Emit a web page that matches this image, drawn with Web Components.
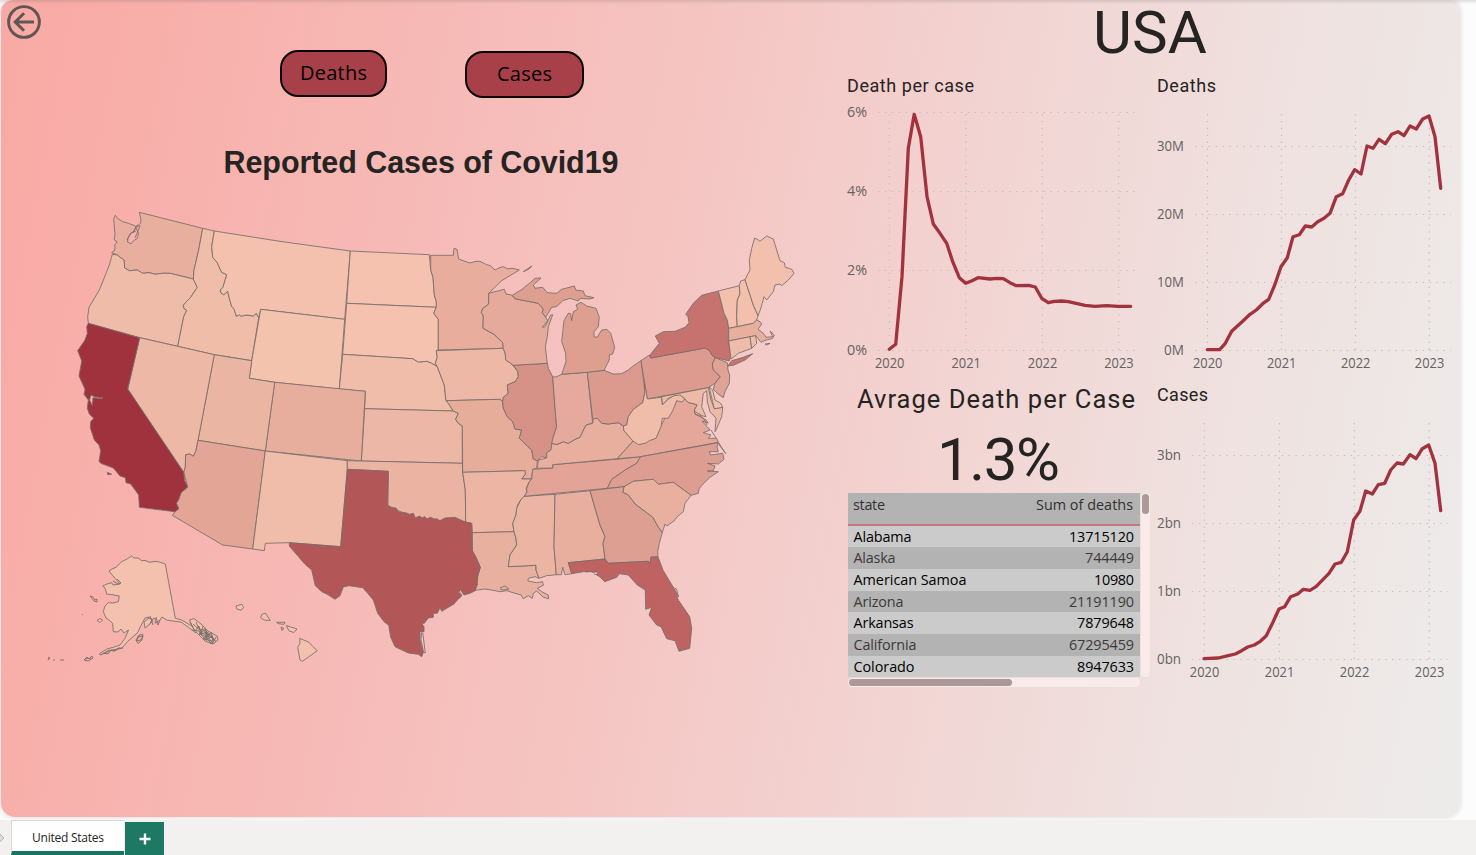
<!DOCTYPE html>
<html lang="en">
<head>
<meta charset="utf-8">
<title>Covid19 report</title>
<style>
html,body{margin:0;height:100%;overflow:hidden;background:#fcfcfc;font-family:"Open Sans","Noto Sans",sans-serif;color:#252423}
</style>
</head>
<body>
<covid-report></covid-report>
<script>
const define=(name,html,setup)=>{
  const t=document.createElement('template');t.innerHTML=html;
  customElements.define(name,class extends HTMLElement{
    constructor(){super();this.attachShadow({mode:'open'}).append(t.content.cloneNode(true));}
    connectedCallback(){if(setup)setup(this,this.shadowRoot);}
  });
};

/* Text whose tracking is adjusted so that it fills the width it is given. */
define('fit-text',`<style>:host{display:inline-block;white-space:nowrap;line-height:1}span{display:inline-block}</style><span><slot></slot></span>`,(el,root)=>{
  const span=root.querySelector('span'),w=+el.getAttribute('w'),n=el.textContent.length;
  const natural=span.getBoundingClientRect().width;
  if(w&&natural)span.style.letterSpacing=((w-natural)/(n-1||1))+'px';
  if(w)el.style.width=w+'px';
});

define('back-button',`<style>:host{display:block;width:34px;height:34px}svg{display:block}</style>
<svg width="34" height="34" fill="none" stroke="#605654" stroke-width="2.9"><circle cx="17" cy="17" r="15.4"/><path d="M27 17H9M17 8.2L8.2 17L17 25.8" stroke-width="3"/></svg>`);

define('pill-button',`<style>:host{display:flex;box-sizing:border-box;align-items:center;justify-content:center;height:47px;padding-bottom:2px;border:2px solid #0b0304;border-radius:18px;background:#a8404a;color:#000;font-size:20px}</style><slot></slot>`);

const STATES=[
['#e8ae9e','115.3,215.3 118.3,219 122.7,221.7 128.3,223.3 134,225.3 136,227 134,231 130,234 128,238 127.5,242 131,243.8 133.5,240.8 137,238.6 138.6,233.5 136.2,228.5 138.5,225 141,222.7 140.7,218.3 139.3,212.3 202.7,228.3 198.7,250 194,270 193.3,279 181,276 170,273.3 162,273.3 155,274.3 149.3,272.7 142.7,273.3 137.3,270 129.3,270.7 124.7,268 124,260 120,257.3 117.3,255 111.7,252.7 114.3,250.7 115,248 114.7,245 117.3,241.7 114.3,240 115,234 114.3,226.7 113.7,219'],
['#efbcaa','112.3,254.3 117.3,255 120,257.3 124,260 124.7,268 129.3,270.7 137.3,270 142.7,273.3 149.3,272.7 155,274.3 162,273.3 170,273.3 181,276 193.3,279 197.3,287.3 190.7,297.3 186,302 183.3,305.3 184,308.5 186.7,310.3 183.7,316.7 177.7,346.3 139.7,337.7 88.3,323.3 87.7,316.7 89,307.3 99.3,290 105,276 109.3,265'],
['#f0bda9','202.7,228.3 214.3,231 211.7,246.7 212.7,257.3 217,262.3 221.7,272.3 226.7,274.7 223,287.3 220.3,290 221,293 223.7,294.7 227.7,291.3 229.3,298.3 231.7,306.7 234,308.7 236.3,316.3 239.3,314.7 241,316.2 243.3,315.7 247,315 253.3,316 256.3,313.3 258.7,317.7 251.7,360.7 214.3,354.7 177.7,346.3 183.7,316.7 186.7,310.3 184,308.5 183.3,305.3 186,302 190.7,297.3 197.3,287.3 193.3,279 194,270 198.7,250'],
['#f3c1ad','214.3,231 281,241.5 350.3,251 344.7,319.3 260.7,309.3 258.7,317.7 256.3,313.3 253.3,316 247,315 243.3,315.7 241,316.2 239.3,314.7 236.3,316.3 234,308.7 231.7,306.7 229.3,298.3 227.7,291.3 223.7,294.7 221,293 220.3,290 223,287.3 226.7,274.7 221.7,272.3 217,262.3 212.7,257.3 211.7,246.7'],
['#f3c3ae','260.7,309.3 344.7,319.3 339.3,389 274.7,382.3 249.3,378.3 251.7,360.7'],
['#f4c2ae','350.3,251 429.3,254.7 430.7,270 433,277.3 434.3,295 436.3,301.7 436.3,307.3 346.7,303.3'],
['#f4c2ae','346.7,303.3 436.3,307.3 433.7,313.3 438.3,319.3 438.3,350 436.3,350.7 437.3,357.3 435.3,363.3 437.3,366.7 431.7,363.3 426.7,361.3 418.3,362.3 412.7,358.7 342.7,354.3'],
['#f0bdaa','342.7,354.3 412.7,358.7 418.3,362.3 426.7,361.3 431.7,363.3 437.3,366.7 441.7,378.3 444.3,385 445.7,399.3 448.3,403.3 453.3,411 364.7,408.7 365.3,391.3 339.3,389'],
['#edb7a7','364.7,408.7 453.3,411 458.3,413.3 455.7,419.3 458,423 462.3,426 462.3,463.3 361.3,461'],
['#e8ae9d','274.7,382.3 365.3,391.3 361.3,461 265.3,451'],
['#ebb5a3','214.3,354.7 251.7,360.7 249.3,378.3 274.7,382.3 265.3,451 198,440.3'],
['#edb8a5','139.7,337.7 177.7,346.3 214.3,354.7 198,440.3 196,450.7 193.3,456.3 190,454 185.7,454.7 185.3,467.3 183.7,472.3 127.7,389'],
['#e3a596','198,440.3 265.3,451 252.7,549 222.7,545 172.3,515.3 175,511.7 178.7,508.7 176.3,503.3 181,492.7 187.7,487 183.7,472.3 185.3,467.3 185.7,454.7 190,454 193.3,456.3 196,450.7'],
['#efbda9','265.3,451 347.3,460.7 347.3,469.3 340.7,546.7 289.3,542.7 265.3,543.3 264.3,550.7 252.7,549'],
['#ebb3a2','347.3,460.7 462.3,463.3 462.7,472.3 465.3,490 465.7,522 455,519 440,522 415,519 387.7,505.3 388.3,471.3 347.3,469.3'],
['#e8ad9d','430.7,255.3 453.3,255.3 454,248.3 457,249.3 458.7,259 464,261 470,263 475,261.5 480,261.3 486.7,264.7 490,265.5 495,270 500,267.5 503.3,266.7 507.3,268.7 513,268.3 519.3,270 511,275 501.7,280.7 488.7,293.3 488.7,304 482.7,308.7 481.3,312.3 483.3,316 483,328.3 494,334.3 502.7,342.7 503.3,348.3 438.3,350 438.3,319.3 433.7,313.3 436.3,307.3 436.3,301.7 434.3,295 433,277.3 430.7,270'],
['#edb8a6','436.3,350.7 503.3,348.3 505.3,354 505.7,360 511.7,364 517.7,371.3 518.3,376.7 515,381.7 507.3,385 508.3,393.3 503.3,397.3 502.7,401.7 500,399.3 446,400.7 444.3,385 441.7,378.3 437.3,366.7 435.3,363.3 437.3,357.3'],
['#e7ad9b','446,400.7 500,399.3 502.7,401.7 503.3,408.3 507.3,416.7 512.7,421.7 515,429 521.7,430 519.3,438.3 531.7,450 533.3,459 537.3,460.7 536.7,468.3 532.7,469.3 531.7,479 521.7,479 525.3,474 525,470.7 462.7,472.3 462.3,426 458,423 455.7,419.3 458.3,413.3 453.3,411 448.3,403.3'],
['#edb6a4','462.7,472.3 525,470.7 525.3,474 521.7,479 531.7,479 529.3,481.7 526,488.3 527,492 523.3,497.3 520.7,500 518,504 516.7,508.3 516,515 512.7,523.3 514,531.7 472.3,532.7 471.7,523.3 465.7,522 465.3,490'],
['#e8b09f','472.3,532.7 514,531.7 516,538.3 516.7,545 510,555 508.3,566.7 536,565.3 536,570 539,578.3 535,576.7 528.3,578.3 528,581 536.7,582.7 542.7,581.7 543.3,585.3 537.3,588.3 541.7,591.7 548.3,595 548.7,598.7 543.3,597.3 536.7,591 533.3,593.3 532.3,598.3 528.3,595.7 523.3,598.7 521,595 515,593.3 506.7,590.7 500,591.7 494,590.5 485,589 477.3,590 475,590.7 477.7,576 480.3,567.3 476,557.3 472.3,550.7'],
['#ecb5a3','524,496.3 555,494.3 554,546.7 556.3,574.7 546.7,575.7 539,578.3 536,570 536,565.3 508.3,566.7 510,555 516.7,545 516,538.3 514,531.7 512.7,523.3 516,515 516.7,508.3 520.7,500'],
['#e8af9f','555,494.3 590,490.7 600,525 605,536.7 603,543.3 605,559 568.3,562.7 571.7,573.7 565,574.7 562.7,567.3 561.3,574.7 556.3,574.7 554,546.7'],
['#e3a396','532.7,469.3 552.7,468 552.7,464.7 616.7,459.3 640.7,456.7 636.7,463.3 625,470 618,475 611.7,479.3 607.3,488.3 524.3,496.3 527,492 526.7,488.3 529.3,481.7 531.7,479'],
['#e8ae9e','537.3,468.3 538.3,460 545.7,458.3 546.7,452.7 550.7,450 551.7,443.3 557,444.5 563.3,441.7 568.3,443.3 575,439.3 580,437.3 583.3,430 586,425 592.7,423.3 593.3,417.3 597.3,418.3 601.7,423.3 608.3,424 618.3,422.7 623.3,426 624,430.7 633.3,441 625,450 617.3,458.7 552.7,464.7 552.7,468'],
['#d69287','513.3,365.3 547.3,363.3 548.3,368.3 552.7,376.7 555.7,416.7 556.7,426.7 553.3,436.7 551.7,445 550.7,450 546.7,452.7 546.7,457.7 541.7,456.7 537.3,460.7 533.3,459 531.7,450 519.3,438.3 521.7,430 515,429 512.7,421.7 507.3,416.7 503.3,408.3 502.7,401.7 503.3,397.3 508.3,393.3 507.3,385 515,381.7 518.3,376.7 517.7,371.3'],
['#e6a99d','552.7,376.7 556,377 561.7,374.3 587.3,372.3 592.7,422.7 586,425 583.3,430 580,437.3 575,439.3 568.3,443.3 563.3,441.7 557,444.5 551.7,443.3 553.3,436.7 556.7,426.7 555.7,416.7'],
['#db9a8d','587.3,372.3 604,370.3 613.3,374 621.7,373.7 628.3,370 633,366 641,360.7 644,383.3 644.7,393.3 642.7,402.7 633.3,409.3 628.3,416.7 626.7,425 623.3,426 618.3,422.7 608.3,424 601.7,423.3 597.3,418.3 592.7,419'],
['#e5aa9c','488.7,293.3 504.3,289.3 506,294 511.7,295 515,298.7 538.3,303.3 543.3,309 542.3,312.7 545.7,317.3 547.7,320.7 542.3,327.3 545,326.7 550.7,315 552.7,314.7 548.3,326.7 547.3,336.7 545.3,346.7 547.3,363.3 513.3,365.3 511.7,364 505.7,360 505.3,354 503.3,348.3 502.7,342.7 494,334.3 483,328.3 483.3,316 481.3,312.3 482.7,308.7 488.7,304'],
['#de9f91','512.3,295.3 521,290 530.7,282.3 535,278.3 541,278 533.3,285 535,288.3 542.7,287.3 547.3,292.7 556.7,293.3 561.7,289.3 574.3,286 575.7,290 583.3,291 585,295.7 594,297.7 590,299 580,298.3 578.3,301 570,298.3 562.7,300.7 556.7,306.7 551.7,307.3 545.7,317.3 542.3,312.7 543.3,309 538.3,303.3 515,298.7'],
['#de9f91','561.7,374.3 566,361.7 565.7,353.3 561.7,341.7 563.3,326.7 564,320.7 568.3,313.3 570.5,313.5 571.7,320.7 573.3,311.7 577.7,309.3 576,305 581,302.3 586.7,306 596,308.3 599.3,317.3 598.3,326.7 594,331.7 594,336.7 597.3,337.3 601.7,330 606.7,329.3 610.7,333.3 614.7,347.3 612.7,354 609.3,355 609.3,360 604,370.3 587.3,372.3'],
['#de9f91','523.3,271.7 531.7,266 529,269'],
['#dc9b8e','641,360.7 649.3,355 650.7,358 705.3,348 710,351 711.7,355 715.3,357.7 712.3,364 713.3,370 720.3,376.7 715,383.3 708.3,387.7 647.3,399'],
['#c6726f','650,355 659.3,343.3 655.3,336 663.3,331.7 675,331.3 685,327.3 689,322.7 688,316.7 685.7,314.3 693.3,303.3 701.7,295.3 718.3,291 720.7,300 724,313.3 727.3,320 728.7,328.3 728.3,341 731,355 729.3,361 715.3,357.7 711.7,355 710,351 705.3,348 650.7,358'],
['#c6726f','727.7,366 731.7,360.7 743.3,357.3 752.7,353.7 745,360 733.3,365.3'],
['#dfa294','715.3,357.7 727.3,362.7 728,370 729.7,375 729.3,383.3 725,391.7 723.3,397.7 717.3,393.3 713.3,389.3 715,383.3 720.3,376.7 713.3,370 712.3,364'],
['#f2c0ac','718.3,291 739.3,285.7 740,294 737.3,300 736.7,316.7 737.3,326.7 728.7,328.3 727.3,320 724,313.3 720.7,300'],
['#f2c0ad','739.3,285.7 740.7,281 745,279.7 753.3,305 758,315.7 756.7,320 753.3,323.3 737.3,326.7 736.7,316.7 737.3,300 740,294'],
['#f2c0ad','745,279.7 747.3,275 750,270 749.3,260 751.7,248.3 754.7,238 758.3,240 760,241.3 766.7,236 773.3,239 780,260.7 784.3,262.7 785.3,267.3 791.7,269.3 794,273.3 788.3,280 781.7,285.7 780,284 775,285 773.3,291.7 766.7,300 764,296.7 762.3,303.3 760,310.7 758,315.7 753.3,305'],
['#e8af9f','728.7,328.3 737.3,326.7 753.3,323.3 756.7,320 760,321.7 761.7,324 758,329.3 763.3,333.3 766,337.3 772.7,336.7 770,331 774.3,335 772.5,338.5 766,340 761,342.3 755.7,335.7 728.7,341'],
['#efbbaa','728.7,341 750,336.7 751.7,348.3 738.3,353.3 731,359'],
['#f1bdac','750,336.7 755.7,335.7 756.7,343.3 751.7,348.3'],
['#e8af9f','765,344 770,343.3 767,345'],
['#eeb9a7','661.7,396.7 708.3,387.7 711,400 714.3,408.7 722.7,407.3 721.7,416.7 716,430 715,431.7 716,418 710,411.7 707.3,401.7 706.7,390.7 703.3,393.3 701.7,406.7 706,416.7 695,414.3 694.3,410 697,405 694,404 688.3,402.7 682.3,396.7 675,395.7 668.3,398.3 662.3,405'],
['#f2c0ad','709,386.7 712.7,390 715,400 720.7,403.3 722.7,407.3 714.3,408.7'],
['#e4a799','633.3,441 640,444 649,440 656,438 661,426 665,418 672,410 677,400 684.7,399 688.3,402.7 694,404 697,405 694.3,410 695,414.3 701,417 706,420 708.3,423 702,421 710,430 703.3,432.7 711,435 708.3,438.3 716.7,438.3 718.3,442.3 640.7,456.7 617.3,458.7 625,450'],
['#f0bdaa','644.5,383.3 647.3,399 661.3,397.3 662.3,405 668.3,399 674,395.7 680,395 684.7,399 682,402 676.7,400.7 672.7,410.7 668.3,418.3 662.3,418.3 661,426.7 656,438.3 649.3,440.7 646,443 638.3,444.7 632.7,440.7 624,430.7 623.3,426 626.7,425 628.3,416.7 633.3,409.3 642.7,402.7 644.7,393.3'],
['#dd9d90','607.3,488.3 611.7,479.3 618,475 625,470 636.7,463.3 640.7,456.7 718.3,442.7 717,447 718.3,451.7 709.3,451.7 710.7,455 722.7,453.3 724,459.3 718.3,464 707.3,463.3 715,466 713.3,470.7 707.3,471 718.3,471.7 710,477.3 704,483 699.3,488.3 698.3,493.3 691,495.3 673.3,482.3 658.3,484.3 653.3,479.3 633.3,481.3 624,486.7'],
['#dd9d90','718.5,442.7 725.7,453.5 720,446'],
['#e9b09f','624,486.7 633.3,481.3 653.3,479.3 658.3,484.3 673.3,482.3 691,495.3 685,503.3 683.3,511.7 676.7,517.3 674,521 666.7,526 665,524 662.3,532.7 658.3,527.3 652.7,517.3 635,504 628.3,495 622.7,492.3'],
['#dd9f92','590,490.7 624,486.7 622.7,492.3 628.3,495 635,504 652.7,517.3 658.3,527.3 662.3,532.7 659.3,543.3 657.7,551.7 658,557 651,557 650,564.7 648.3,561.3 608.3,563.3 605,559 603,543.3 605,536.7 600,525'],
['#be6362','568.3,562.7 605,559 608.3,563.3 648.3,561.3 650,564.7 651,557 658,557 663.3,570.7 675,590 678.3,600 689.7,616.7 691.7,628.3 689.7,648.3 679,651.3 675,640.7 666.7,638.7 661,626.7 656.7,625 649,615 651.7,607.3 645.7,609.3 645.3,590 637.3,585 628.3,575 619.3,573.7 616.7,577.3 604.7,581.7 600,577 596.7,575 598.3,572.3 590,571.7 583.3,571.7 571.7,573.7'],
['#b35658','347.3,469.3 388.3,471.3 387.7,505.3 391.7,507.7 396,508 398.3,511.7 406.7,513 409.3,514.3 413.3,513.3 415.3,518 419.3,516 422.7,518 424,516.5 427.3,518.7 430.7,517.3 434,519 436.7,518.7 440,520.7 445,518 455,517.3 465,522 471.7,523.3 472.3,550.7 476,557.3 480.3,567.3 477.7,576 477.3,585 475,590.7 470,593.3 464,595 460.7,590 458.3,592 461.7,596 456.7,600.7 454,604 441.7,611.3 440,607.7 437.3,613.3 433.3,613.3 433.3,617.3 428.3,618 424.3,623.3 421.7,623.3 424,626.7 424,631.7 420,631.7 420,640 423.3,652.7 421.7,656.7 418.3,654.3 408.3,653 395,646.7 390.7,637.3 388.7,625.3 384,621.7 377.7,613.3 373.3,600 367.7,593.3 362.7,587.7 349,585.7 343.3,587 340,595.7 335,599.3 327.3,594.3 321.7,591.7 315.3,585.7 311.7,570 305,564.3 289.3,546 289.3,542.7 340.7,546.7'],
['#a0323d','88.3,323.3 139.7,337.7 127.7,389 183.7,472.3 184.5,480 187.7,487 181,492.7 179,499 176.3,503.3 178.7,508.7 175,511.7 139.3,507.3 138.7,495 130.7,484 126,482.7 125.3,477.7 120,476 113.3,468 100.7,463.3 99,461 100.7,451 99,445 94.3,440 90.3,427.7 90.7,421.7 93.7,418.3 89.3,414 87.3,408.3 88.3,400 84,394.3 85,389.3 79,376 81.7,361 77.7,350.7 85,340 87.3,333.3 86.7,326.7'],
['#a0323d','107.3,472.3 111.7,474.3 107.7,474.6'],
['#f4c1ae','131.7,556 134,558 138,558 141.7,560.7 145,560.5 150,562.3 154,561.5 158.3,561.7 165.3,564 175.3,618.3 181.7,620 190,625 198,629 196,633 188,627 181,622 175,621.3 166.7,620 162,617 160,620 155,623.3 156,619 153.3,618.3 152,622 146,626 149,617 145,618 140,627.3 138,632 135,635 127.3,641.7 121.7,648.3 111.7,650 100,655 99.5,653.5 107,649 113.3,647.3 120,645 125,638.3 128.5,630 124,633 121,629 118,632 113.3,631.7 112.7,623.3 109,620 106,618 103.3,611.7 105,606 108.3,602.7 113,603 118.3,601.7 119.3,596 114,595 106.7,594 105,588 102.7,586 107,584 111.7,582.7 113,585 120,584 115,578.3 109,571 112,569 116,567.3 121.7,561.7 127,559'],
['#f4c1ae','236,606 241.7,604.3 243.7,607.3 241,610.3 236.5,608.8'],
['#f4c1ae','260.5,617.5 262,614.3 265.5,613.3 270.3,620.5 264,620'],
['#f4c1ae','276.5,622.3 285,622.3 284,624.3 279,623.8'],
['#f4c1ae','281,627 284,628.7 281.8,630.5'],
['#f4c1ae','286.3,625.5 291,627 297,629 294,632.5 289,631'],
['#f4c1ae','299.7,638.3 309,642.3 312.7,646.5 317.3,650.7 310.3,655.7 302.3,661.3 300,660 297.7,647.3 300,643'],
['#f4c1ae','144,622 149,618 152,619 150,624 145,628'],
['#e9afa5','136,640 139,635 143,634.5 142,640 138,643.5'],
['#f4c1ae','97,620.5 100,618.5 102.5,620 100,622.5'],
['#f4c1ae','189.5,620 194,618.5 201,624 208,631 217,636 218,640 213,644 205,641 198,634 193,628']
];
const LINES='M127 240 131 233 136 231M133 233 137 225 140 226 135 238M421.5 633 422.8 633 425.3 653 423.5 652 421 640ZM458 590l4 5M674.5 588l2 1 2 8-3-6M586 572l5-1 3 2M594 574l4 1M500 589l3 1 6-1-4-3-5 2M711 430l5 8M694 411l7 4M700 416l4 3 3 6';
const ALASKA='M190 622l5 9 4-5 2 8 4-6 3 9 3-5 3 9 2-4M192 630l7 1 5 7 5 0 4 6M196 622l3 7 5 1 3 6 6 2 3 4M203 626l-2 8 6-2-1 8 6-4 1 7M208 634l7 6-4 4-6-9M193 624l9 8-3 2 8 3-4 2 9 2-2 2M199 633l10 2-4-5 8 7 M101 655l8-5 5 1 6-3M103 653l5 1 3-4 4 1 3-3 5 0M84 660l3-3 2 2 3-3 1 2-5 3ZM85 659l6-1M48 657l2 1-2 2 1-2M53 660l2 0M60 660l4 0M90 596l3 1 2 3 2-1 0 3-3-1ZM82 614l.8.8M156 617l2 8 2-5M150 616l3 9M113 581l5 3 3-1-4-4M139 636l-3 5 5-1 2-4-5 1';
define('us-map',`<style>:host{display:block}svg{display:block}</style><svg width="770" height="480" viewBox="40 200 770 480"></svg>`,(el,root)=>{
  root.querySelector('svg').innerHTML='<g stroke="#766e69" stroke-width=".85" stroke-linejoin="round">'+
   STATES.map(([f,p])=>`<polygon fill="${f}" points="${p}"/>`).join('')+
   `<path fill="#f5b3ae" d="M91 395L95 397 102.7 397.7 102 398.7 93 397.7 92.3 405.7 89.5 400Z"/>`+
   `<path fill="none" d="${LINES}"/><path fill="none" stroke-width=".9" d="${ALASKA}"/></g>`;
});

const CHARTS={
 rate:{view:[845,101,305,275],x0:878,x1:1140,y0:111,yb:350,
  ys:[[112,'6%',20],[191,'4%',20],[270,'2%',20],[350,'0%',20]],yr:867,
  xs:[889.5,966,1042.3,1118.7],xl:363,
  p:'889.3,349.3 895.7,344.3 902,276.7 908.3,148.3 914.2,114.3 920.7,136.7 927,196.7 933.3,224 940,233.3 946.7,243.3 952.7,261.7 959.3,277.7 965.7,283.3 972,280.7 978,277.7 990,279 996.7,278.3 1003.3,278.7 1010,282.7 1016.3,285.7 1028.7,285.3 1035.3,287 1041.7,298.3 1048.3,302.7 1054.3,301.3 1061.7,301 1068.3,301.7 1085,305.3 1095,306.3 1106.7,305.7 1118.3,306.3 1130.7,306.3'},
 deaths:{view:[1155,101,300,275],x0:1195,x1:1451,y0:110,yb:350,
  ys:[[146,'30M',27],[214,'20M',27],[282,'10M',27],[350,'0M',20]],yr:1184,
  xs:[1207.5,1281.5,1355.5,1429.3],xl:363,
  p:'1207.3,349.7 1219.7,349.7 1225.3,343.3 1231.7,331.3 1244,320 1250,314.3 1256.3,310 1262.7,303.7 1268.7,299.3 1274.7,285 1281,266.7 1287.3,257.7 1293,236.7 1299.3,234.7 1305.3,226 1311.7,227 1317.7,221.7 1324,218.3 1330,213.3 1336.3,196.7 1342.7,193.7 1348.7,180 1354.7,169.7 1361,174 1367,146 1373,148.3 1379,139.3 1385.3,143.7 1391.7,134.3 1398,131.7 1404,135.7 1410,126 1416.3,129 1422.7,119 1429,116 1435,136.7 1440.7,188.3'},
 cases:{view:[1155,410,300,280],x0:1192,x1:1448,y0:419,yb:659,
  ys:[[455,'3bn',24],[523,'2bn',24],[591,'1bn',24],[659,'0bn',24]],yr:1181,
  xs:[1204.3,1279.3,1354.3,1429.3],xl:672,
  p:'1204,658.7 1218.3,658 1228.3,655.7 1235.3,654 1241.7,650.7 1247.7,647 1254.3,645 1260.3,641.3 1266.3,635.7 1272.7,622.7 1279,609 1284.7,606.7 1290.7,596.7 1297.7,594 1303.3,589.3 1310,590.3 1316,586.7 1329,573.3 1335,564 1341.3,562.3 1347.3,551.7 1353.7,520 1360,511 1365.7,491 1372.3,494 1378.3,484.7 1384.7,483.3 1390.7,470 1397,463 1403.3,464 1410,454.7 1416,458.7 1422.3,448.7 1428.7,445 1435,463.3 1440.7,510.7'}
};
define('line-chart',`<style>:host{display:flex;flex-direction:column}
h3{margin:0;height:30px;box-sizing:border-box;padding:5px 0 0 2px;font:400 18px/20px Roboto,sans-serif;color:#252423}
svg{display:block}text{font-size:14px;fill:#666260}</style><h3><slot></slot></h3><div></div>`,(el,root)=>{
  const c=CHARTS[el.getAttribute('kind')],[vx,vy,vw,vh]=c.view;
  const grid=c.ys.map(([y])=>`<path d="M${c.x0} ${y+.5}H${c.x1}"/>`).join('')+c.xs.map(x=>`<path d="M${x} ${c.yb}V${c.y0}"/>`).join('');
  const labels=c.ys.map(([y,t,w])=>`<text x="${c.yr-w}" y="${y+5}" textLength="${w}" lengthAdjust="spacingAndGlyphs">${t}</text>`).join('')+
   c.xs.map((x,i)=>`<text x="${x-14.5}" y="${c.xl+5}" textLength="29.5" lengthAdjust="spacingAndGlyphs">${2020+i}</text>`).join('');
  root.querySelector('div').innerHTML=`<svg width="${vw}" height="${vh}" viewBox="${c.view.join(' ')}"><g stroke="#c6c1bf" stroke-width="1.2" stroke-dasharray="1.4 5.5" fill="none">${grid}</g><polyline fill="none" stroke="#a2323e" stroke-width="3.3" stroke-linejoin="round" stroke-linecap="round" points="${c.p}"/>${labels}</svg>`;
});

define('state-table',`<style>:host{display:grid;grid-template-columns:292px 9px;grid-template-rows:184px 9px;column-gap:1px;row-gap:1px;font:400 14.4px "Open Sans","Noto Sans",sans-serif}
.view{overflow:hidden;background:#b3b3b3}
.head{box-sizing:border-box;height:32.5px;border-bottom:2px solid #c97680;background:#b3b3b3;display:flex;justify-content:space-between;padding:5px 7px 0 5px;color:#33302f}
.row{box-sizing:border-box;height:21.7px;display:flex;justify-content:space-between;align-items:center;padding:1px 6px 0 5.5px;background:#cbcbcb;color:#000}
.row:nth-child(odd){background:#b3b3b3;color:#3c3a39}
.track{background:#f8eceb;border-radius:5px;padding:1px}
.thumb{background:#aa9998;border-radius:5px}
.v .thumb{height:20px}.h .thumb{width:163px;height:7px}</style>
<div class="view"></div><div class="track v"><div class="thumb"></div></div><div class="track h"><div class="thumb"></div></div>`,(el,root)=>{
  const rows=[['Alabama',58,'13715120',65],['Alaska',42,'744449',49],['American Samoa',113,'10980',40],['Arizona',50,'21191190',65],['Arkansas',60,'7879648',57],['California',63,'67295459',65],['Colorado',61,'8947633',57]];
  root.querySelector('.view').innerHTML='<div class="head"><fit-text w="32">state</fit-text><fit-text w="97">Sum of deaths</fit-text></div>'+
   rows.map(r=>`<div class="row"><fit-text w="${r[1]}">${r[0]}</fit-text><fit-text w="${r[3]}">${r[2]}</fit-text></div>`).join('');
});

define('report-canvas',`<style>
:host{display:grid;box-sizing:border-box;grid-template-columns:844px 1fr;width:1459px;height:817px;margin-left:1px;overflow:hidden;border-radius:12px 10px 14px 14px;
background:linear-gradient(101deg,#f9a9a4 0%,#f5c3c0 42%,#f2d3d1 62%,#efe0de 79%,#edebea 98%);box-shadow:0 0 5px rgba(0,0,0,.16)}
.left{padding:5px 0 0 5px}
back-button{margin-left:1px}
.buttons{display:flex;gap:78px;margin:11px 0 0 274px}
.buttons pill-button:nth-child(2){margin-top:1px}
h1{margin:46px 0 0 217.5px;font:700 30.5px/36px "Liberation Sans",Arial,sans-serif;height:36px}
us-map{margin:20px 0 0 34px}
.right{display:grid;grid-template-columns:310px 1fr;grid-template-rows:71px 305px 320px}
.country{grid-column:1/3;font:400 60px/1 Roboto,sans-serif;padding:3px 0 0 248px}
.avg{font-family:Roboto,sans-serif;padding:0 0 0 3px}
.avg h2{margin:0;box-sizing:border-box;font-weight:400;font-size:25.5px;padding:8px 0 0 9px;height:49px}
.avg .num{box-sizing:border-box;font-size:60px;line-height:1;padding:5px 0 0 89px;height:68px}
line-chart.c{margin-top:4px}
</style>
<section class="left"><back-button></back-button>
<div class="buttons"><pill-button style="width:107px"><fit-text w="67">Deaths</fit-text></pill-button><pill-button style="width:119px"><fit-text w="55">Cases</fit-text></pill-button></div>
<h1><fit-text w="395">Reported Cases of Covid19</fit-text></h1>
<us-map></us-map></section>
<section class="right"><div class="country"><fit-text w="114">USA</fit-text></div>
<line-chart kind="rate"><fit-text w="127">Death per case</fit-text></line-chart>
<line-chart kind="deaths"><fit-text w="59">Deaths</fit-text></line-chart>
<div class="avg"><h2><fit-text w="278">Avrage Death per Case</fit-text></h2><div class="num"><fit-text w="123">1.3%</fit-text></div><state-table></state-table></div>
<line-chart class="c" kind="cases"><fit-text w="51">Cases</fit-text></line-chart></section>`);

define('page-tabs',`<style>:host{display:flex;height:35px;background:#f2f1f0;margin-top:3px;font-size:12px}
.arrow{width:11px;display:flex;align-items:center}
.tab{box-sizing:border-box;width:113px;background:#fff;border:solid #dad8d6;border-width:1px 0 0 1px;border-bottom:4px solid #177561;display:flex;align-items:center;justify-content:center;color:#252423;padding-top:4px}
.add{width:40px;margin-top:2px;background:#1d7964;display:flex;align-items:center;justify-content:center;border-left:1px solid #f2f1f0;box-sizing:border-box}</style>
<div class="arrow"><svg width="5" height="10"><path d="M0 1L4 5 0 9" fill="#dedcda" stroke="#b9b7b5"/></svg></div>
<div class="tab"><fit-text w="72">United States</fit-text></div>
<div class="add"><svg width="12" height="12"><path d="M6 .5V11.5M.5 6H11.5" stroke="#fff" stroke-width="2.4"/></svg></div>`);

define('covid-report',`<style>:host{display:block;width:1476px;height:855px;overflow:hidden;position:relative}
.edge{position:absolute;left:0;top:0;width:100%;height:4px;background:linear-gradient(rgba(90,80,80,.18),rgba(90,80,80,0))}</style>
<report-canvas></report-canvas><page-tabs></page-tabs><div class="edge"></div>`);
</script>
</body>
</html>
